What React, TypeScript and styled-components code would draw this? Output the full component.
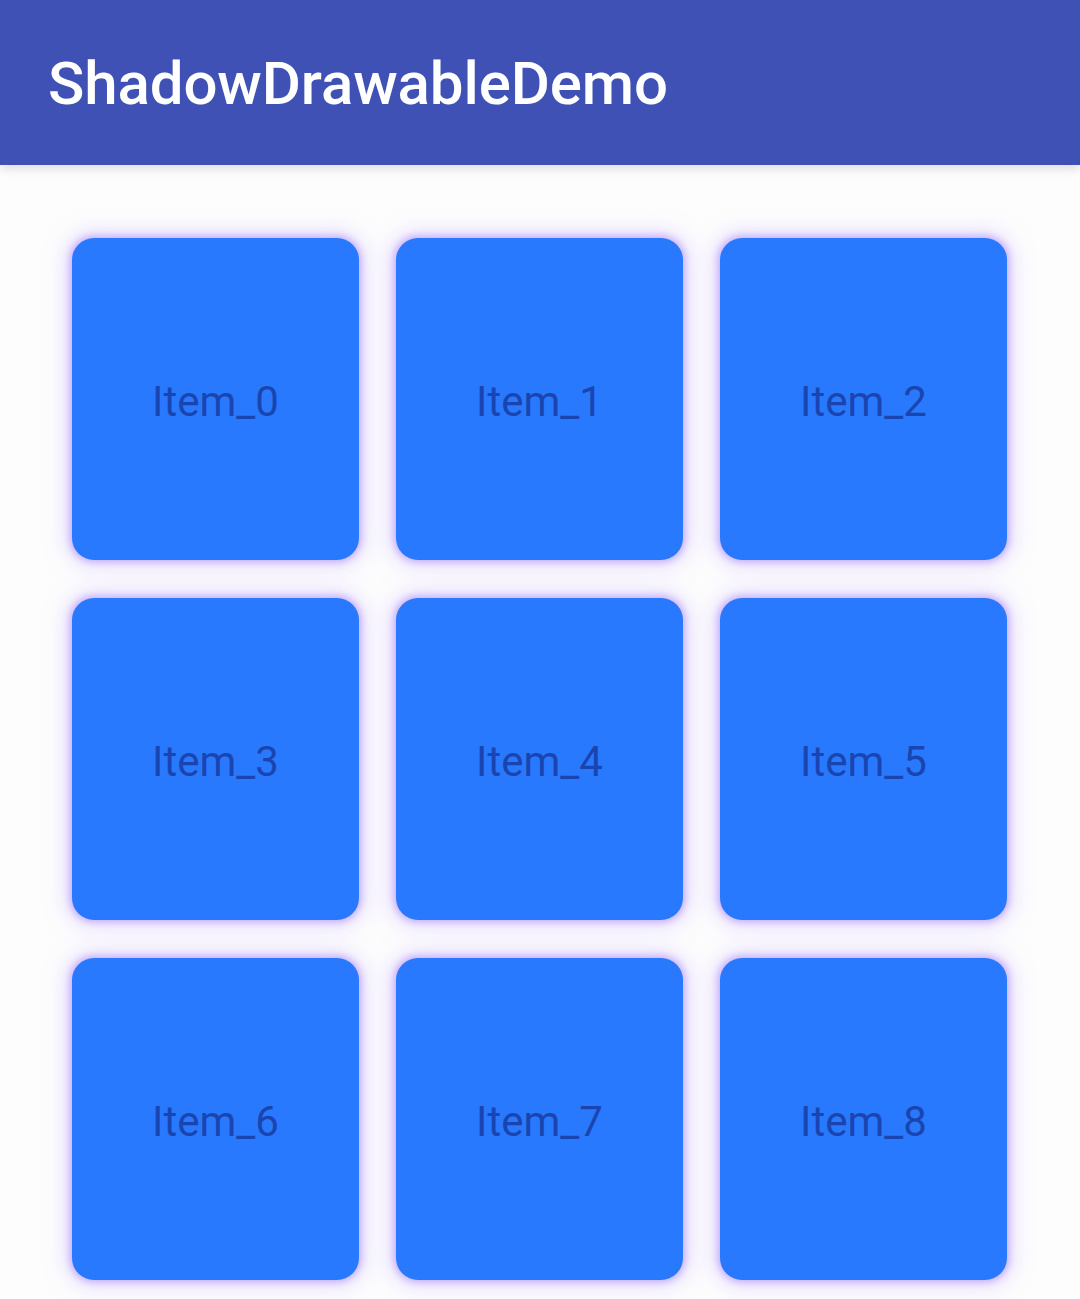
import React from "react";
import styled, { createGlobalStyle } from "styled-components";

const Global = createGlobalStyle`
  html, body { margin: 0; padding: 0; background: #ffffff; }
  body { font-family: Roboto, "Noto Sans", sans-serif; }
`;

const Screen = styled.div`
  width: 1080px;
  height: 1299px;
  background: #fdfdfd;
  overflow: hidden;
  display: flex;
  flex-direction: column;
`;

const AppBar = styled.header`
  height: 165px;
  background: #3f51b5;
  display: flex;
  align-items: center;
  padding-left: 48px;
  box-shadow: 0 4px 10px rgba(0, 0, 0, 0.12);
  position: relative;
  z-index: 1;
  flex-shrink: 0;
`;

const Title = styled.h1`
  margin: 0;
  color: #ffffff;
  font-family: Roboto, sans-serif;
  font-weight: 500;
  font-size: 60px;
  letter-spacing: -0.1px;
  line-height: 1;
  padding-top: 2px;
`;

const Grid = styled.main`
  display: grid;
  grid-template-columns: repeat(3, 287px);
  grid-auto-rows: 322px;
  column-gap: 37px;
  row-gap: 38px;
  padding: 73px 0 0 72px;
`;

const Card = styled.div`
  background: #2979ff;
  border-radius: 22px;
  display: flex;
  align-items: center;
  justify-content: center;
  box-shadow: 0 0 6px 3px rgba(160, 120, 255, 0.45), 0 0 20px 9px rgba(200, 180, 255, 0.35);
`;

const Label = styled.span`
  color: #1a45b0;
  font-family: Roboto, sans-serif;
  font-size: 42px;
  font-weight: 400;
  margin-top: 4px;
`;

export default function App() {
  const items = Array.from({ length: 9 }, (_, i) => `Item_${i}`);
  return (
    <>
      <Global />
      <Screen>
        <AppBar>
          <Title>ShadowDrawableDemo</Title>
        </AppBar>
        <Grid>
          {items.map((t) => (
            <Card key={t}>
              <Label>{t}</Label>
            </Card>
          ))}
        </Grid>
      </Screen>
    </>
  );
}
